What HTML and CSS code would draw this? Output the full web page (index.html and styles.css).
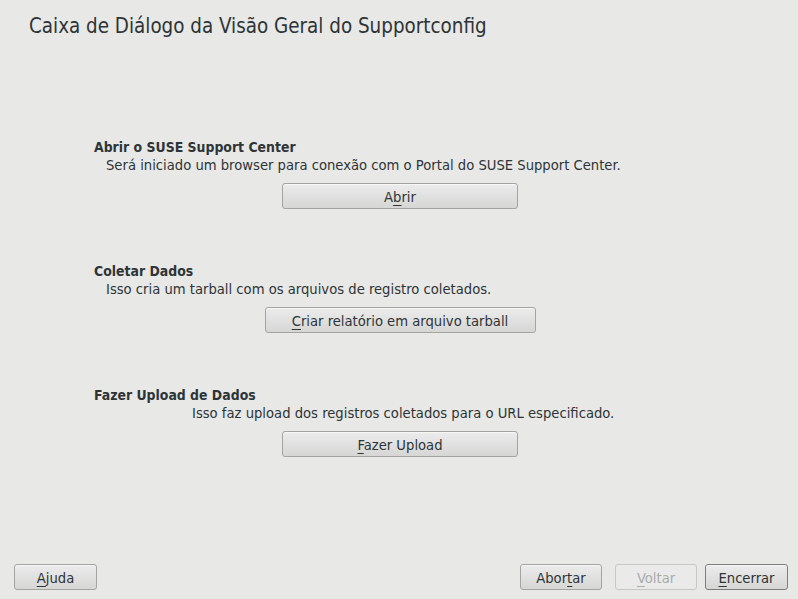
FILE: index.html
```html
<!DOCTYPE html>
<html lang="pt">
<head>
<meta charset="utf-8">
<link rel="stylesheet" href="styles.css">
</head>
<body>
<div class="dialog">
  <h1 class="title">Caixa de Diálogo da Visão Geral do Supportconfig</h1>
  <main class="content">
    <section class="section s1">
      <div class="heading">Abrir o SUSE Support Center</div>
      <div class="desc">Será iniciado um browser para conexão com o Portal do SUSE Support Center.</div>
      <div class="btnrow"><button class="btn wide">A<u>b</u>rir</button></div>
    </section>
    <section class="section s2">
      <div class="heading">Coletar Dados</div>
      <div class="desc">Isso cria um tarball com os arquivos de registro coletados.</div>
      <div class="btnrow"><button class="btn wider"><u>C</u>riar relatório em arquivo tarball</button></div>
    </section>
    <section class="section s3">
      <div class="heading">Fazer Upload de Dados</div>
      <div class="desc shifted">Isso faz upload dos registros coletados para o URL especificado.</div>
      <div class="btnrow"><button class="btn wide"><u>F</u>azer Upload</button></div>
    </section>
  </main>
  <footer class="footer">
    <button class="btn small"><u>A</u>juda</button>
    <div class="right">
      <button class="btn small abort">Abor<u>t</u>ar</button>
      <button class="btn small disabled back"><u>V</u>oltar</button>
      <button class="btn small default"><u>E</u>ncerrar</button>
    </div>
  </footer>
</div>
</body>
</html>
```
FILE: styles.css
```css
html, body {
  margin: 0;
  padding: 0;
  background: #e8e8e7;
}
body {
  width: 798px;
  height: 599px;
  overflow: hidden;
  font-family: "DejaVu Sans Condensed", "DejaVu Sans", sans-serif;
  font-stretch: condensed;
  color: #2e3436;
}
.dialog {
  display: flex;
  flex-direction: column;
  height: 599px;
}
.title {
  margin: 0;
  padding: 13px 0 0 29px;
  font-size: 20.4px;
  font-weight: normal;
  line-height: 26px;
  color: #2e3436;
}
.content {
  padding: 99px 0 0 94px;
  width: 612px;
  display: flex;
  flex-direction: column;
}
.section {
  display: flex;
  flex-direction: column;
  height: 124px;
}
.heading {
  font-weight: bold;
  font-size: 13.9px;
  line-height: 18px;
}
.desc {
  font-size: 14.65px;
  line-height: 18px;
  padding-left: 12px;
}
.desc.shifted {
  padding-left: 98px;
}
.btnrow {
  display: flex;
  justify-content: center;
  margin-top: 9px;
}
.btn {
  font-family: inherit;
  font-stretch: condensed;
  font-size: 14.65px;
  color: #2e3436;
  height: 26px;
  padding: 0;
  border: 1px solid #a4a4a3;
  border-radius: 3px;
  background: linear-gradient(#edecec, #d6d6d5);
  box-shadow: inset 0 1px #f6f6f5;
}
.btn u {
  text-decoration-thickness: 1px;
  text-underline-offset: 3px;
}
.btn.wide { width: 236px; }
.btn.wider { width: 271px; }
.footer {
  margin-top: auto;
  display: flex;
  justify-content: space-between;
  padding: 0 10px 9px 14px;
}
.right {
  display: flex;
}
.btn.small { width: 83px; }
.btn.abort { width: 82px; margin-right: 13px; }
.btn.back { width: 82px; margin-right: 8px; }
.btn.disabled {
  color: #a8abab;
  background: #eaeaea;
  border-color: #c8c8c7;
  box-shadow: none;
}
.btn.default {
  border-color: #7d7d7c;
}
```
